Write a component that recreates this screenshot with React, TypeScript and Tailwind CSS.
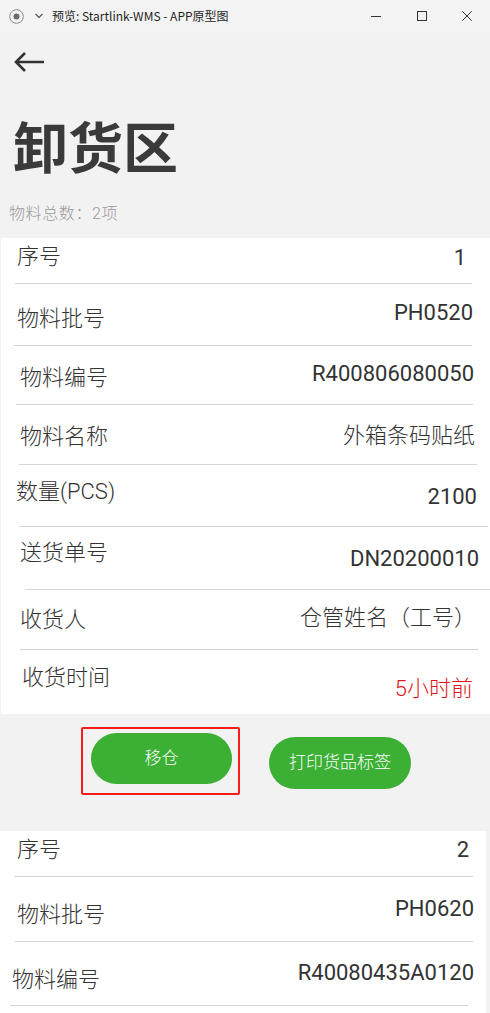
import React from "react";

type RowDef = {
  h: string;
  lc: string;
  vc: string;
  label: string;
  value: string;
  line?: string;
  red?: boolean;
  cjk?: boolean;
};

const card1: RowDef[] = [
  { h: "h-[45px]", lc: "ml-[16px] mt-[5px]", vc: "mr-[24px] mt-[6px]", label: "序号", value: "1", line: "ml-[14px] mr-[18px]" },
  { h: "h-[61px]", lc: "ml-[16px] mt-[21px]", vc: "mr-[17px] mt-[15px]", label: "物料批号", value: "PH0520", line: "ml-[13px] mr-[18px]" },
  { h: "h-[58px]", lc: "ml-[19px] mt-[18px]", vc: "mr-[16px] mt-[14px]", label: "物料编号", value: "R400806080050", line: "ml-[15px] mr-[17px]" },
  { h: "h-[59px]", lc: "ml-[19px] mt-[18px]", vc: "mr-[15px] mt-[17px]", label: "物料名称", value: "外箱条码贴纸", line: "ml-[18px] mr-[13px]", cjk: true },
  { h: "h-[61px]", lc: "ml-[15px] mt-[13px]", vc: "mr-[13px] mt-[18px]", label: "数量(PCS)", value: "2100", line: "ml-[18px] mr-[2px]" },
  { h: "h-[62px]", lc: "ml-[19px] mt-[12px]", vc: "mr-[11px] mt-[18px]", label: "送货单号", value: "DN20200010", line: "ml-[24px] mr-0" },
  { h: "h-[59px]", lc: "ml-[19px] mt-[16px]", vc: "mr-[14px] mt-[14px]", label: "收货人", value: "仓管姓名（工号）", line: "ml-[19px] mr-[12px]", cjk: true },
  { h: "h-[64px]", lc: "ml-[21px] mt-[14px]", vc: "mr-[17px] mt-[25px]", label: "收货时间", value: "5小时前", red: true, cjk: true },
];

const card2: RowDef[] = [
  { h: "h-[45px]", lc: "ml-[17px] mt-[5px]", vc: "mr-[17px] mt-[5px]", label: "序号", value: "2", line: "ml-[14px] mr-[13px]" },
  { h: "h-[64px]", lc: "ml-[17px] mt-[24px]", vc: "mr-[12px] mt-[18px]", label: "物料批号", value: "PH0620", line: "ml-[15px] mr-[13px]" },
  { h: "h-[63px]", lc: "ml-[12px] mt-[24px]", vc: "mr-[12px] mt-[17px]", label: "物料编号", value: "R40080435A0120", line: "ml-[10px] mr-[18px]" },
];

function Row({ r }: { r: RowDef }) {
  return (
    <div>
      <div className={`flex justify-between items-start ${r.h}`}>
        <span className={`text-[22px] leading-[28px] font-light text-[#333] ${r.lc}`}>{r.label}</span>
        <span
          className={`text-[22px] leading-[28px] ${r.cjk ? "font-light" : "font-normal"} ${r.red ? "text-[#e0161e]" : "text-[#333]"} ${r.vc}`}
        >
          {r.value}
        </span>
      </div>
      {r.line && <div className={`h-px bg-[#d6d6d6] ${r.line}`} />}
    </div>
  );
}

export default function App() {
  return (
    <div className="w-[490px] h-[1013px] overflow-hidden bg-[#f2f2f2] font-['Roboto','Noto_Sans_CJK_SC',sans-serif]">
      {/* window title bar */}
      <div className="h-[32px] flex items-center bg-[#f3f3f3] text-[#1f1f1f]">
        <svg className="ml-[9px]" width="15" height="15" viewBox="0 0 15 15">
          <circle cx="7.5" cy="7.5" r="6.8" fill="none" stroke="#8a8a8a" strokeWidth="1" />
          <circle cx="7.5" cy="7.5" r="3" fill="#6a6a6a" />
        </svg>
        <svg className="ml-[11px]" width="8" height="6" viewBox="0 0 8 6">
          <path d="M0.5 1 L4 4.5 L7.5 1" fill="none" stroke="#555" strokeWidth="1.2" />
        </svg>
        <span className="ml-[9px] text-[12px] leading-[16px] font-['Noto_Sans_CJK_SC',sans-serif]">预览: Startlink-WMS - APP原型图</span>
        <div className="flex-1" />
        <svg width="10" height="10" viewBox="0 0 10 10">
          <line x1="0" y1="5.5" x2="10" y2="5.5" stroke="#333" strokeWidth="1" />
        </svg>
        <svg className="ml-[36px]" width="10" height="10" viewBox="0 0 10 10">
          <rect x="0.5" y="0.5" width="9" height="9" fill="none" stroke="#333" strokeWidth="1" />
        </svg>
        <svg className="ml-[35px] mr-[18px]" width="10" height="10" viewBox="0 0 10 10">
          <path d="M0.3 0.3 L9.7 9.7 M9.7 0.3 L0.3 9.7" stroke="#333" strokeWidth="1" />
        </svg>
      </div>

      {/* header */}
      <div className="h-[206px] flex flex-col items-start">
        <svg className="ml-[13px] mt-[19px]" width="32" height="22" viewBox="0 0 32 22">
          <path d="M31 11 H3 M12 2 L3 11 L12 20" fill="none" stroke="#333" strokeWidth="2.6" />
        </svg>
        <h1 className="ml-[13px] mt-[49px] text-[55px] font-bold leading-[55px] text-[#3a3a3a]">卸货区</h1>
        <p className="ml-[9px] mt-[25px] text-[16px] leading-[24px] tracking-[0.6px] font-light text-[#999]">物料总数：2项</p>
      </div>

      {/* card 1 */}
      <div className="bg-white ml-px">
        {card1.map((r, i) => (
          <Row key={i} r={r} />
        ))}
      </div>

      {/* buttons */}
      <div className="h-[117px] flex items-start">
        <div className="relative ml-[91px] mt-[19px]">
          <div className="absolute -left-[10px] -top-[6px] w-[159px] h-[68px] border-2 border-[#ff1a1a] rounded-[2px]" />
          <button className="w-[141px] h-[51px] rounded-full bg-[#3bb035] text-white text-[17px] font-light">移仓</button>
        </div>
        <button className="ml-[37px] mt-[23px] w-[142px] h-[52px] rounded-full bg-[#3bb035] text-white text-[17px] font-light">打印货品标签</button>
      </div>

      {/* card 2 */}
      <div className="bg-white w-[486px] h-[200px]">
        {card2.map((r, i) => (
          <Row key={i} r={r} />
        ))}
      </div>
    </div>
  );
}
